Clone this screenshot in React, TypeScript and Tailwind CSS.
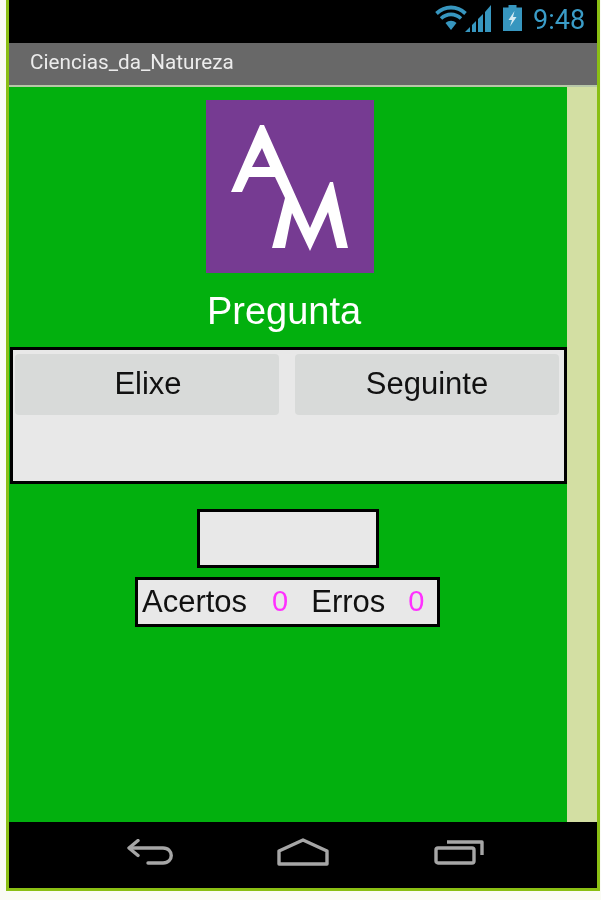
const sans = 'font-["Liberation_Sans",Arial,sans-serif]'

function StatusIcons() {
  return (
    <>
      {/* wifi */}
      <svg width="32" height="26" viewBox="0 0 32 26" fill="none" className="ml-[435px]">
        <path d="M1.5 8.5C10 0.5 22 0.5 30.5 8.5" stroke="#3796bf" strokeWidth="3.8" />
        <path d="M6 13.5C12 8 20 8 26 13.5" stroke="#3796bf" strokeWidth="3.6" />
        <path d="M10.5 18C14 15 18 15 21.5 18L16 25Z" fill="#3796bf" />
      </svg>
      {/* signal */}
      <svg width="26" height="27" viewBox="0 0 26 27" className="-ml-[2px]">
        <path d="M0 27L5 22V27Z" fill="#3796bf" />
        <path d="M7 20L11 16V27H7Z" fill="#3796bf" />
        <path d="M13 14L18 9V27H13Z" fill="#3796bf" />
        <path d="M20 7L26 0V27H20Z" fill="#3796bf" />
      </svg>
      {/* battery */}
      <svg width="19" height="26" viewBox="0 0 19 26" className="ml-[12px]">
        <path d="M5.5 0H13.5V2.5H19V26H0V2.5H5.5Z" fill="#3796bf" />
        <path d="M11.5 6L5.5 15H9L7 21.5L13.5 12H10Z" fill="#d5eaf3" />
      </svg>
    </>
  )
}

function BackIcon() {
  return (
    <svg width="46" height="26" viewBox="0 0 46 26" fill="none" stroke="#a6a6a6" strokeWidth="3.4">
      <path d="M11 1.5L2 9L11 16.5" strokeLinejoin="round" strokeLinecap="round" />
      <path d="M3 9H36C47 9 47 24 36 24H21" strokeLinecap="round" />
    </svg>
  )
}

function HomeIcon() {
  return (
    <svg width="52" height="28" viewBox="0 0 52 28" fill="none" stroke="#a6a6a6" strokeWidth="3.4" strokeLinejoin="round">
      <path d="M26 2L50 13V26H2V13Z" />
    </svg>
  )
}

function RecentIcon() {
  return (
    <svg width="50" height="26" viewBox="0 0 50 26" fill="none" stroke="#a6a6a6" strokeWidth="3.4" strokeLinejoin="round">
      <rect x="2" y="9" width="38" height="15" rx="2" />
      <path d="M13 3H48V16" />
    </svg>
  )
}

export default function App() {
  return (
    <div className={`w-[601px] h-[900px] bg-[#fafbf4] overflow-hidden blur-[0.7px] ${sans}`}>
      <div className="ml-[6px] w-[594px] h-[891px] border-x-[3px] border-b-[3px] border-[#8abf14] flex flex-col">
        <div className="h-[43px] bg-black flex items-start pt-[5px]">
          <div className="flex items-start -ml-[9px]">
            <StatusIcons />
            <span className='ml-[11px] font-["Roboto",sans-serif] text-[27px] leading-[30px] text-[#3a9cc7]'>9:48</span>
          </div>
        </div>
        <div className='h-[42px] bg-[#686868] flex items-center pl-[21px] pb-[2px] font-["Roboto",sans-serif] text-[20.7px] text-[#ececec]'>
          Ciencias_da_Natureza
        </div>
        <div className="h-[2px] bg-[#b7c7a8]" />

        <div className="flex flex-1">
          <div className="w-[558px] bg-[#02b00e] flex flex-col items-start">
            <div className="mt-[13px] ml-[197px] w-[168px] h-[173px] bg-[#763b92]">
              <svg width="168" height="173" viewBox="0 0 168 173" fill="#ffffff" fillRule="evenodd">
                <path d="M54 25H58L104 128L124 82H127L142 148H131L122 112L104 151L86 113L79 148H66L79 98L69 77H43L36 92H25ZM56 48L46 67H64Z" />
              </svg>
            </div>
            <div className="w-[550px] h-[74px] flex items-center justify-center text-white text-[38px] pt-[2px]">
              Pregunta
            </div>
            <div className="ml-[1px] w-[557px] h-[137px] border-[3px] border-black bg-[#e8e8e8] pt-[4px] pl-[2px] flex items-start gap-[16px]">
              <button className="w-[264px] h-[61px] pl-[2px] bg-[#d8dad9] rounded-sm text-[31px] text-[#111111]">Elixe</button>
              <button className="w-[264px] h-[61px] bg-[#d8dad9] rounded-sm text-[31px] text-[#111111]">Seguinte</button>
            </div>
            <div className="mt-[25px] ml-[188px] w-[182px] h-[59px] border-[3px] border-black bg-[#e8e8e8]" />
            <div className="mt-[9px] ml-[126px] w-[305px] h-[50px] border-[3px] border-black bg-[#e8e8e8] flex items-center pl-[4px] text-[31px] text-[#111111]">
              <span>Acertos</span>
              <span className="ml-[25px] text-[#ff30ff] text-[29px]">0</span>
              <span className="ml-[23px]">Erros</span>
              <span className="ml-[23px] text-[#ff30ff] text-[29px]">0</span>
            </div>
          </div>
          <div className="flex-1 bg-[#d3dfa3]" />
        </div>

        <div className="h-[66px] bg-black flex items-start pt-[17px] pl-[118px]">
          <BackIcon />
          <div className="ml-[104px] -mt-[1px]"><HomeIcon /></div>
          <div className="ml-[105px]"><RecentIcon /></div>
        </div>
      </div>
    </div>
  )
}
